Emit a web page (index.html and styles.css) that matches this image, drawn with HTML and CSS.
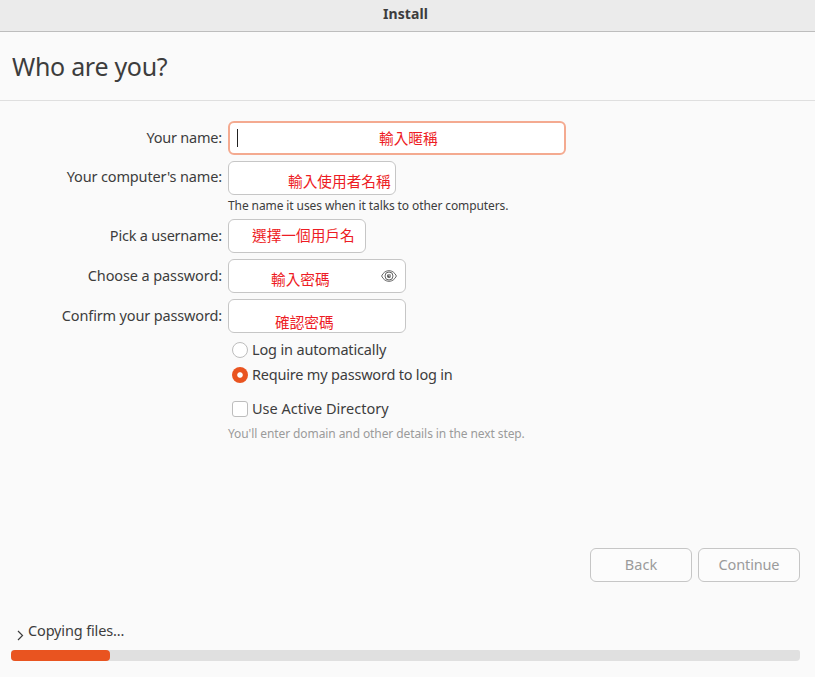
FILE: index.html
```html
<!DOCTYPE html>
<html lang="en">
<head>
<meta charset="utf-8">
<title>Install</title>
<link rel="stylesheet" href="styles.css">
</head>
<body>
<header class="titlebar">Install</header>
<h1 class="heading">Who are you?</h1>
<main class="form">
  <div class="row">
    <label class="label label-name">Your name:</label>
    <div class="field field-name"><i class="caret"></i><span lang="zh-Hant">輸入暱稱</span></div>
  </div>
  <div class="row">
    <label class="label label-computer">Your computer's name:</label>
    <div class="field field-computer"><span lang="zh-Hant">輸入使用者名稱</span></div>
  </div>
  <p class="hint">The name it uses when it talks to other computers.</p>
  <div class="row">
    <label class="label label-user">Pick a username:</label>
    <div class="field field-user"><span lang="zh-Hant">選擇一個用戶名</span></div>
  </div>
  <div class="row">
    <label class="label label-password">Choose a password:</label>
    <div class="field field-password"><span lang="zh-Hant">輸入密碼</span>
      <svg class="eye" width="16" height="14" viewBox="0 0 16 14" fill="none" stroke="#666">
        <path d="M.6 7C2.300 3.500 4.800 1.700 8 1.700s5.700 1.800 7.400 5.300C13.700 10.500 11.200 12.300 8 12.300S2.300 10.500.6 7z"/>
        <circle cx="8" cy="7" r="4"/>
        <circle cx="8" cy="7" r="2" fill="#555" stroke="none"/>
        <path d="M8 5v2h2" stroke="#ddd" stroke-width=".8"/>
      </svg>
    </div>
  </div>
  <div class="row">
    <label class="label label-confirm">Confirm your password:</label>
    <div class="field field-confirm"><span lang="zh-Hant">確認密碼</span></div>
  </div>
  <div class="options">
    <div class="option option-auto"><i class="radio"></i><span>Log in automatically</span></div>
    <div class="option option-require"><i class="radio checked"></i><span>Require my password to log in</span></div>
    <div class="option option-directory"><i class="checkbox"></i><span>Use Active Directory</span></div>
  </div>
  <p class="hint hint-muted">You'll enter domain and other details in the next step.</p>
</main>
<div class="actions">
  <button class="button button-back" disabled>Back</button>
  <button class="button" disabled>Continue</button>
</div>
<footer class="status">
  <div class="status-line">
    <svg class="chevron" width="7" height="11" viewBox="0 0 7 11" fill="none" stroke="#3d3d3d" stroke-width="1.2"><path d="M1 1l4.500 4.500L1 10"/></svg>
    <span>Copying files...</span>
  </div>
  <div class="progress"><div class="progress-fill"></div></div>
</footer>
</body>
</html>
```
FILE: styles.css
```css
* { box-sizing: border-box; }
body {
  margin: 0;
  height: 677px;
  display: flex;
  flex-direction: column;
  overflow: hidden;
  background: #fafafa;
  color: #3d3d3d;
  font: 14.5px/20px "Noto Sans", sans-serif;
  letter-spacing: -.15px;
}
.titlebar {
  height: 32px;
  padding: 4px 4px 0 0;
  background: #ebebeb;
  border-bottom: 1px solid #bdbdbd;
  text-align: center;
  font-size: 14px;
  font-weight: 700;
  letter-spacing: .1px;
}
.heading {
  height: 69px;
  margin: 0;
  padding: 16px 12px 0;
  border-bottom: 1px solid #dfdfdf;
  font-size: 25px;
  line-height: 36px;
  font-weight: 400;
  letter-spacing: -.3px;
}
.form { padding-top: 20px; height: 447px; }
.row {
  display: grid;
  grid-template-columns: 222px auto;
  column-gap: 6px;
  justify-content: start;
  height: 34px;
  margin-bottom: 6px;
}
.label { text-align: right; padding-top: 6px; }
.label-name, .label-user { letter-spacing: -.22px; }
.label-computer { padding-top: 5px; }
.label-password { letter-spacing: -.1px; }
.field {
  display: flex;
  align-items: flex-start;
  height: 34px;
  border: 1px solid #c6c6c6;
  border-radius: 6px;
  background: #fff;
  color: #ed1c24;
  font: 14.67px/20px "Noto Sans CJK TC", sans-serif;
  letter-spacing: 0;
  white-space: nowrap;
}
.field-name { width: 338px; border: 2px solid #f4aa90; padding: 5px 0 0 7px; }
.caret { width: 1px; height: 18px; margin: 1px 141px 0 0; background: #222; }
.field-computer { width: 168px; padding: 9px 0 0 59px; }
.field-user { width: 138px; padding: 5px 0 0 23px; }
.field-password { width: 178px; padding: 9px 0 0 42px; }
.field-confirm { width: 178px; padding: 12px 0 0 46px; }
.eye { margin: 0 8px 0 auto; }
.hint {
  height: 18px;
  margin: -4px 0 4px 228px;
  font-size: 12px;
  line-height: 18px;
  letter-spacing: -.1px;
}
.options { margin: 1px 0 0 232px; }
.option {
  display: flex;
  align-items: center;
  gap: 4px;
  height: 20px;
  margin-bottom: 5px;
}
.option-require { margin-bottom: 14px; letter-spacing: -.2px; }
.option-directory { letter-spacing: 0; }
.radio, .checkbox {
  width: 16px;
  height: 16px;
  margin-top: 2px;
  border: 1px solid #bdbdbd;
  border-radius: 50%;
  background: #fff;
}
.checkbox { border-radius: 3px; }
.checked { border: none; background: radial-gradient(circle, #fff 2.300px, #e95420 3.200px); }
.hint-muted { margin-top: 7px; color: #9b9b9b; letter-spacing: -.09px; }
.actions { display: flex; justify-content: flex-end; gap: 6px; padding-right: 15px; }
.button {
  width: 102px;
  height: 34px;
  padding: 0 0 2px;
  border: 1px solid #c6c6c6;
  border-radius: 6px;
  background: #fcfcfc;
  color: #9b9b9b;
  font: inherit;
  letter-spacing: -.15px;
}
.button-back { letter-spacing: 0; }
.status { padding: 38px 15px 0 11px; }
.status-line { display: flex; gap: 4px; height: 30px; padding: 0 0 0 6px; }
.chevron { margin-top: 10px; }
.progress { height: 11px; border-radius: 2px 2px 4px 4px; background: #e0e0e0; }
.progress-fill { width: 99px; height: 11px; border-radius: 4px; background: #e95420; }
```
